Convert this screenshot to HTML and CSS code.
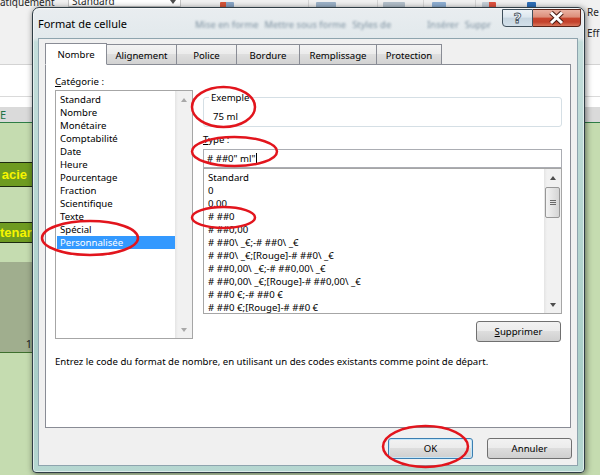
FILE: index.html
```html
<!DOCTYPE html>
<html lang="fr">
  <head>
    <meta charset="UTF-8" />
    <meta name="viewport" content="width=device-width, initial-scale=1.0" />
    <title>Format de cellule</title>
    <link rel="stylesheet" href="styles.css">
  </head>
  <body>
    <div class="screen">
      <div class="ribbon">
        <div class="ribbon-main">
          <span class="ribbon-text">atiquement</span>
          <span class="combo"><span class="combo-text">Standard</span><span class="arrow-down"></span></span>
          <span class="rb-icon rb-table"></span>
          <span class="rb-sep rb-sep-a"></span>
          <span class="rb-icon rb-brush"></span>
          <span class="rb-sep rb-sep-b"></span>
          <span class="rb-icon rb-style"></span>
          <span class="rb-sep rb-sep-c"></span>
          <span class="rb-icon rb-insert"></span>
          <span class="rb-sep rb-sep-d"></span>
          <span class="rb-icon rb-delete"></span>
          <span class="rb-icon rb-format"></span>
        </div>
        <div class="ribbon-side">
          <span>Re</span>
          <span>Eff</span>
        </div>
      </div>
      <div class="formula"></div>
      <div class="blank"></div>
      <div class="colhead">E</div>
      <div class="sheet">
        <div class="sheet-col">
          <div class="band-a"></div>
          <div class="tag tag-end">acie</div>
          <div class="band-b"></div>
          <div class="tag tag-start">tenar</div>
          <div class="band-c"></div>
          <div class="block">1</div>
        </div>
      </div>

      <div class="dialog">
        <div class="titlebar">
          <span class="title">Format de cellule</span>
          <div class="ghosts">
            <span class="ghost">Mise en forme</span>
            <span class="ghost">Mettre sous forme</span>
            <span class="ghost">Styles de</span>
            <span class="ghost ghost-far">Insérer</span>
            <span class="ghost">Suppr</span>
          </div>
          <div class="caption">
            <button class="cap cap-help">?</button>
            <button class="cap cap-close">
              <svg width="47" height="16" viewBox="0 0 47 16">
                <path class="x-out" d="M18 2.5 L29 13 M29 2.5 L18 13" />
                <path class="x-in" d="M18 2.5 L29 13 M29 2.5 L18 13" />
              </svg>
            </button>
          </div>
        </div>

        <div class="client">
          <div class="tabs">
            <span class="tab active">Nombre</span>
            <span class="tab">Alignement</span>
            <span class="tab">Police</span>
            <span class="tab">Bordure</span>
            <span class="tab">Remplissage</span>
            <span class="tab">Protection</span>
          </div>

          <div class="panel">
            <div class="panel-main">
              <div class="col-cat">
                <div class="field-label"><u>C</u>atégorie :</div>
                <div class="listbox list-cat">
                  <ul class="items">
                    <li>Standard</li>
                    <li>Nombre</li>
                    <li>Monétaire</li>
                    <li>Comptabilité</li>
                    <li>Date</li>
                    <li>Heure</li>
                    <li>Pourcentage</li>
                    <li>Fraction</li>
                    <li>Scientifique</li>
                    <li>Texte</li>
                    <li>Spécial</li>
                    <li class="selected">Personnalisée</li>
                  </ul>
                  <div class="vscroll off">
                    <span class="sb-btn"><span class="arrow-up"></span></span>
                    <span class="sb-track"></span>
                    <span class="sb-btn"><span class="arrow-down"></span></span>
                  </div>
                </div>
              </div>

              <div class="col-type">
                <fieldset class="sample">
                  <legend>Exemple</legend>
                  <div class="sample-value">75 ml</div>
                </fieldset>
                <div class="field-label"><u>T</u>ype :</div>
                <div class="type-input"># ##0" ml"<span class="caret"></span></div>
                <div class="listbox list-type">
                  <ul class="items">
                    <li>Standard</li>
                    <li>0</li>
                    <li>0,00</li>
                    <li># ##0</li>
                    <li># ##0,00</li>
                    <li># ##0\ _€;-# ##0\ _€</li>
                    <li># ##0\ _€;[Rouge]-# ##0\ _€</li>
                    <li># ##0,00\ _€;-# ##0,00\ _€</li>
                    <li># ##0,00\ _€;[Rouge]-# ##0,00\ _€</li>
                    <li># ##0 €;-# ##0 €</li>
                    <li># ##0 €;[Rouge]-# ##0 €</li>
                  </ul>
                  <div class="vscroll">
                    <span class="sb-btn"><span class="arrow-up"></span></span>
                    <span class="thumb"><i></i><i></i><i></i></span>
                    <span class="sb-track"></span>
                    <span class="sb-btn"><span class="arrow-down"></span></span>
                  </div>
                </div>
                <div class="row-end">
                  <button class="btn"><u>S</u>upprimer</button>
                </div>
              </div>
            </div>
            <p class="hint">Entrez le code du format de nombre, en utilisant un des codes existants comme point de départ.</p>
          </div>

          <div class="footer">
            <button class="btn btn-default">OK</button>
            <button class="btn">Annuler</button>
          </div>
        </div>
      </div>

      <svg class="marks" width="600" height="475" viewBox="0 0 600 475">
        <ellipse cx="223.5" cy="107" rx="31.5" ry="20" />
        <ellipse cx="234.5" cy="151.5" rx="42.5" ry="14.5" />
        <ellipse cx="223.5" cy="217.5" rx="31.5" ry="10.5" />
        <ellipse cx="90" cy="238" rx="48" ry="17" />
        <ellipse cx="425.5" cy="446.5" rx="42.5" ry="20.5" />
      </svg>
    </div>
  </body>
</html>
```

FILE: styles.css
```css
* {
  box-sizing: border-box;
}
body {
  margin: 0;
  font-family: "Noto Sans", "Open Sans", sans-serif;
  font-size: 9.6px;
  color: #000;
}
.screen {
  position: relative;
  width: 600px;
  height: 475px;
  overflow: hidden;
  display: flex;
  flex-direction: column;
  background: #c5dcb0;
}

/* excel window behind the dialog */
.ribbon {
  height: 65px;
  display: flex;
  background: #f1f1f1;
  border-bottom: 1px solid #d3d3d3;
}
.ribbon-main {
  flex: 1;
  height: 8px;
  overflow: hidden;
  display: flex;
  align-items: flex-end;
}
.ribbon-text {
  width: 55px;
  flex-shrink: 0;
  font-size: 10px;
  line-height: 14px;
  margin-bottom: -1px;
  white-space: nowrap;
  color: #262626;
}
.combo {
  width: 113px;
  height: 20px;
  margin: 0 0 1px 13px;
  flex-shrink: 0;
  display: flex;
  align-items: flex-end;
  justify-content: space-between;
  padding: 0 4px 0 3px;
  background: #fff;
  border: 1px solid #c6c6c6;
}
.combo-text {
  font-size: 10px;
  line-height: 14px;
  margin-bottom: -2px;
  color: #262626;
}
.combo .arrow-down {
  margin-bottom: 2px;
}
.rb-icon {
  height: 6px;
  flex-shrink: 0;
  border-radius: 1px;
}
.rb-sep {
  width: 1px;
  height: 8px;
  flex-shrink: 0;
  background: #d6d6d6;
}
.rb-table {
  width: 14px;
  margin-left: 39px;
  background: linear-gradient(90deg, #d8553a 40%, #8aa7c8 40%);
}
.rb-sep-a {
  margin-left: 74px;
}
.rb-brush {
  width: 20px;
  margin-left: 7px;
  background: #9db3c9;
}
.rb-sep-b {
  margin-left: 41px;
}
.rb-style {
  width: 22px;
  margin-left: 5px;
  background: #b4c1cc;
}
.rb-sep-c {
  margin-left: 18px;
}
.rb-insert {
  width: 14px;
  margin-left: 8px;
  background: #8fb0d4;
}
.rb-sep-d {
  margin-left: 29px;
}
.rb-delete {
  width: 14px;
  margin-left: 6px;
  background: linear-gradient(90deg, #c5cfd8 50%, #e0523f 50%);
}
.rb-format {
  width: 9px;
  margin-left: 31px;
  background: #2f6fb8;
}
.ribbon-side {
  width: 15px;
  flex-shrink: 0;
  display: flex;
  flex-direction: column;
  gap: 8px;
  padding: 6px 0 0 2px;
  overflow: hidden;
  white-space: nowrap;
  font-size: 10px;
  line-height: 13px;
  color: #262626;
}
.formula {
  height: 32px;
  background: #fff;
  border-bottom: 1px solid #dadada;
}
.blank {
  height: 10px;
  background: #fff;
}
.colhead {
  height: 16px;
  background: #dadada;
  border-bottom: 1px solid #2e7d46;
  color: #217346;
  font-size: 11px;
  line-height: 15px;
}
.sheet {
  flex: 1;
  display: flex;
}
.sheet-col {
  width: 32px;
  display: flex;
  flex-direction: column;
}
.band-a {
  height: 39px;
}
.band-b {
  height: 35px;
}
.band-c {
  height: 19px;
}
.tag {
  display: flex;
  align-items: center;
  overflow: hidden;
  white-space: nowrap;
  background: #6e9b21;
  border-top: 1px solid #1c2a10;
  border-bottom: 1px solid #1c2a10;
  color: #f7f500;
  font: bold 13px "Liberation Sans", Arial, sans-serif;
}
.tag-end {
  height: 25px;
  justify-content: flex-end;
  padding-right: 5px;
}
.tag-start {
  height: 21px;
}
.block {
  height: 91px;
  display: flex;
  align-items: flex-end;
  justify-content: flex-end;
  padding-bottom: 1px;
  background: #a0ae8e;
  border-bottom: 1px solid #3e6f2e;
  font-size: 11px;
  line-height: 14px;
  color: #222;
}

/* dialog window */
.dialog {
  position: absolute;
  left: 32px;
  top: 7px;
  width: 553px;
  height: 466px;
  display: flex;
  flex-direction: column;
  padding-bottom: 6px;
  border: 1px solid #2f3d45;
  border-radius: 7px 7px 4px 4px;
  background: linear-gradient(#e9edf0, #e2e9ec 30px, #c4dedb 34px, #a9cec8 80%, #b6d7d1);
  box-shadow: 1px 1px 6px rgba(0, 0, 0, 0.55), inset 0 0 0 1px rgba(255, 255, 255, 0.55);
}
.titlebar {
  height: 30px;
  display: flex;
  align-items: center;
  padding-left: 5px;
}
.title {
  width: 157px;
  flex-shrink: 0;
  font-size: 11px;
}
.ghosts {
  flex: 1;
  min-width: 0;
  display: flex;
  overflow: hidden;
  padding-top: 3px;
  white-space: nowrap;
  font-size: 9.4px;
  color: #7f93a2;
  filter: blur(1.1px);
}
.ghost + .ghost {
  margin-left: 6px;
}
.ghosts .ghost-far {
  margin-left: 36px;
}
.caption {
  display: flex;
  align-self: flex-start;
  flex-shrink: 0;
  margin: 1px 3px 0 0;
}
.cap {
  height: 18px;
  padding: 0;
  display: flex;
  align-items: center;
  justify-content: center;
  border: 1px solid #3f4f5b;
}
.cap-help {
  width: 31px;
  border-radius: 0 0 0 4px;
  background: linear-gradient(#eef3f7, #dce6ee 45%, #c7d5e0 50%, #d3e0ea);
  font: bold 14px "DejaVu Sans", sans-serif;
  line-height: 1;
  color: #f4f7fa;
  -webkit-text-stroke: 0.8px #45525c;
}
.cap-close {
  width: 48px;
  border-color: #5a2217;
  border-left: none;
  border-radius: 0 0 4px 0;
  background: linear-gradient(#eab2a3, #dc8d79 45%, #c8462f 50%, #c3412b 75%, #d8765c);
}
.x-out {
  fill: none;
  stroke: #4a1a12;
  stroke-width: 5;
}
.x-in {
  fill: none;
  stroke: #fff;
  stroke-width: 3;
}
.client {
  flex: 1;
  margin: 0 6px 0 5px;
  display: flex;
  flex-direction: column;
  padding: 4px 6px 6px;
  background: #f0f0f0;
  border: 1px solid #8ea4ae;
}
.tabs {
  position: relative;
  z-index: 1;
  display: grid;
  grid-template-columns: 62px 70px 60px 63px 77px 65px;
  align-items: end;
  height: 22px;
  margin-bottom: -1px;
}
.tab {
  height: 21px;
  display: flex;
  align-items: center;
  justify-content: center;
  padding-top: 2px;
  white-space: nowrap;
  border: 1px solid #898c95;
  border-left: none;
  background: linear-gradient(#f3f3f3, #ebebeb 50%, #dedede 50%, #d2d2d2);
}
.tab:first-child {
  border-left: 1px solid #898c95;
}
.tab.active {
  height: 22px;
  padding-top: 1px;
  background: #fff;
  border-bottom-color: #fff;
}
.panel {
  height: 364px;
  padding: 10px 8px 0 9px;
  background: #fff;
  border: 1px solid #898c95;
}
.panel-main {
  display: flex;
  gap: 10px;
}
.col-cat {
  width: 138px;
}
.col-type {
  width: 359px;
}
.field-label {
  height: 13px;
  line-height: 13px;
}
.col-type .field-label {
  margin-top: 6px;
}
.listbox {
  display: flex;
  background: #fff;
  border: 1px solid #a6a6a6;
}
.list-cat {
  height: 249px;
  margin-top: 2px;
}
.list-type {
  height: 146px;
}
.items {
  flex: 1;
  margin: 0;
  padding: 2px 0 0 1px;
  list-style: none;
  overflow: hidden;
}
.items li {
  height: 13px;
  line-height: 13px;
  padding-left: 3px;
  white-space: nowrap;
}
.items .selected {
  background: #3399ff;
  color: #fff;
}
.vscroll {
  width: 17px;
  display: flex;
  flex-direction: column;
  background: linear-gradient(90deg, #e4e4e4, #f1f1f1 3px, #f1f1f1);
}
.sb-btn {
  height: 17px;
  display: flex;
  align-items: center;
  justify-content: center;
}
.sb-track {
  flex: 1;
}
.arrow-up,
.arrow-down {
  width: 0;
  height: 0;
  border-left: 3.5px solid transparent;
  border-right: 3.5px solid transparent;
}
.arrow-up {
  border-bottom: 4px solid #4d4d4d;
}
.arrow-down {
  border-top: 4px solid #4d4d4d;
}
.vscroll.off .arrow-up {
  border-bottom-color: #a8a8a8;
}
.vscroll.off .arrow-down {
  border-top-color: #a8a8a8;
}
.thumb {
  height: 31px;
  margin: 1px 1px 0;
  display: flex;
  flex-direction: column;
  align-items: center;
  justify-content: center;
  gap: 1px;
  border: 1px solid #979797;
  border-radius: 2px;
  background: linear-gradient(90deg, #f3f3f3, #e4e4e4 50%, #d5d5d5);
}
.thumb i {
  width: 6px;
  height: 1px;
  background: #6a6a6a;
}
.sample {
  margin: 16px 0 0;
  padding: 6px 8px 3px 5px;
  min-width: 0;
  border: 1px solid #d5dfe5;
  border-radius: 3px;
}
.sample legend {
  padding: 0 2px;
  line-height: 13px;
}
.sample-value {
  margin-left: 4px;
  line-height: 13px;
}
.type-input {
  height: 19px;
  margin-top: 3px;
  padding-left: 3px;
  line-height: 17px;
  white-space: pre;
  background: #fff;
  border: 1px solid #abadb3;
}
.caret {
  display: inline-block;
  width: 1px;
  height: 12px;
  margin-left: 1px;
  vertical-align: middle;
  background: #000;
}
.row-end {
  display: flex;
  justify-content: flex-end;
  margin-top: 7px;
  padding-right: 1px;
}
.hint {
  margin: 13px 0 0;
  line-height: 13px;
  white-space: nowrap;
}
.footer {
  display: flex;
  justify-content: flex-end;
  gap: 14px;
  margin: 10px -1px 0 0;
}
.btn {
  width: 85px;
  height: 21px;
  padding: 0;
  font: inherit;
  color: #000;
  border: 1px solid #707070;
  border-radius: 3px;
  background: linear-gradient(#f2f2f2, #ebebeb 50%, #dddddd 50%, #cfcfcf);
}
.btn-default {
  border-color: #3c7fb1;
  box-shadow: inset 0 0 0 1px #c5e6f8;
}

/* red annotation circles */
.marks {
  position: absolute;
  left: 0;
  top: 0;
  pointer-events: none;
}
.marks ellipse {
  fill: none;
  stroke: #e2151d;
  stroke-width: 2.5;
}
```
